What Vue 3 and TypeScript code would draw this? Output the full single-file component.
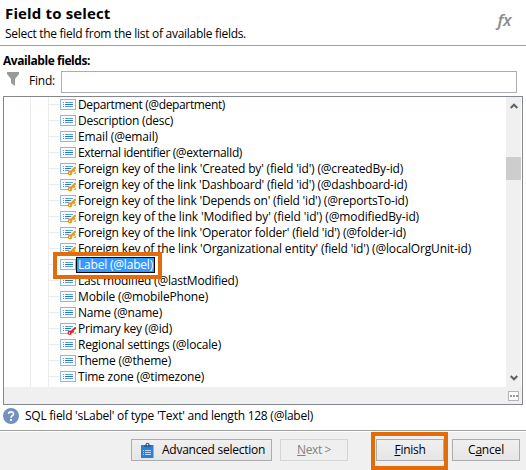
<script setup lang="ts">
type Kind = 'field' | 'foreign' | 'primary'
interface Field {
  text: string
  kind: Kind
  width: number
}

const fields: Field[] = [
  { text: 'Department (@department)', kind: 'field', width: 147 },
  { text: 'Description (desc)', kind: 'field', width: 95 },
  { text: 'Email (@email)', kind: 'field', width: 80 },
  { text: 'External identifier (@externalId)', kind: 'field', width: 164 },
  { text: "Foreign key of the link 'Created by' (field 'id') (@createdBy-id)", kind: 'foreign', width: 325 },
  { text: "Foreign key of the link 'Dashboard' (field 'id') (@dashboard-id)", kind: 'foreign', width: 329 },
  { text: "Foreign key of the link 'Depends on' (field 'id') (@reportsTo-id)", kind: 'foreign', width: 330 },
  { text: "Foreign key of the link 'Modified by' (field 'id') (@modifiedBy-id)", kind: 'foreign', width: 341 },
  { text: "Foreign key of the link 'Operator folder' (field 'id') (@folder-id)", kind: 'foreign', width: 328 },
  { text: "Foreign key of the link 'Organizational entity' (field 'id') (@localOrgUnit-id)", kind: 'foreign', width: 393 },
  { text: 'Label (@label)', kind: 'field', width: 75 },
  { text: 'Last modified (@lastModified)', kind: 'field', width: 160 },
  { text: 'Mobile (@mobilePhone)', kind: 'field', width: 130 },
  { text: 'Name (@name)', kind: 'field', width: 84 },
  { text: 'Primary key (@id)', kind: 'primary', width: 94 },
  { text: 'Regional settings (@locale)', kind: 'field', width: 143 },
  { text: 'Theme (@theme)', kind: 'field', width: 93 },
  { text: 'Time zone (@timezone)', kind: 'field', width: 126 },
]
const selected = 10

const context = document.createElement('canvas').getContext('2d')

/* Letter spacing that brings a label to its intended width. */
function fit(text: string, width: number, font = '12px "Open Sans"'): { letterSpacing: string } {
  if (!context) return { letterSpacing: '0' }
  context.font = font
  const spacing = (width - context.measureText(text).width) / text.length
  return { letterSpacing: `${spacing.toFixed(3)}px` }
}
</script>

<template>
  <div class="dialog">
    <header class="header">
      <div>
        <h1><span :style="fit('Field to select', 105.5, 'bold 15px &quot;Open Sans&quot;')">Field to select</span></h1>
        <p><span :style="fit('Select the field from the list of available fields.', 241)">Select the field from the list of available fields.</span></p>
      </div>
      <span class="fx">fx</span>
    </header>

    <main class="content">
      <div class="caption"><span :style="fit('Available fields:', 87, 'bold 12px &quot;Open Sans&quot;')">Available fields:</span></div>
      <div class="find">
        <svg class="funnel" width="12" height="14" viewBox="0 0 12 14"><path d="M0 0H12V2L8 7V14L4 11V7L0 2Z" fill="#999" /></svg>
        <label for="find"><span :style="fit('Find:', 26)">Find:</span></label>
        <input id="find" type="text" />
      </div>

      <div class="tree">
        <div class="view">
          <ul class="rows">
            <li v-for="(field, i) in fields" :key="field.text" class="row">
              <svg class="icon" width="16" height="14" viewBox="0 0 16 14">
                <rect x=".5" y="1.5" width="15" height="10" fill="#fff" stroke="#84bae6" />
                <path d="M3 4.5h1M3 6.5h1M3 8.5h1" stroke="#4a94d8" />
                <path d="M5 4.5h8M5 8.5h8" stroke="#5a9fdb" />
                <path d="M5 6.5h8" stroke="#2675bf" />
                <template v-if="field.kind === 'foreign'">
                  <path d="M17 4.5L9.5 12" stroke="#fff" stroke-width="5.5" />
                  <path d="M15.8 5L10.5 10.3M13.2 8l1.6 1.6" stroke="#f0960f" stroke-width="2.2" />
                  <circle cx="10" cy="11" r="2.4" fill="#f0960f" />
                  <circle cx="9.8" cy="11.3" r=".7" fill="#fff" />
                </template>
                <template v-if="field.kind === 'primary'">
                  <path d="M17 4.5L9.5 12" stroke="#fff" stroke-width="5.5" />
                  <path d="M15.8 5.4L10.5 10.3M12.2 9l1.4 1.4" stroke="#e52428" stroke-width="2.1" />
                  <circle cx="9.8" cy="10.8" r="2.2" fill="#e52428" />
                  <circle cx="9.5" cy="11" r=".7" fill="#fff" />
                </template>
              </svg>
              <span class="name" :class="{ selected: i === selected }" :style="fit(field.text, field.width)">{{ field.text }}</span>
            </li>
          </ul>
          <div class="vbar">
            <svg class="up" width="8" height="6" viewBox="0 0 8 6"><path d="M.7 5L4 1.7L7.3 5" fill="none" stroke="#606060" stroke-width="2" /></svg>
            <div class="thumb"></div>
            <svg class="down" width="8" height="6" viewBox="0 0 8 6"><path d="M.7 1L4 4.3L7.3 1" fill="none" stroke="#606060" stroke-width="2" /></svg>
          </div>
        </div>
        <div class="hbar"><span class="more"><i></i><i></i><i></i></span></div>
        <div class="mark mark-row"></div>
      </div>

      <div class="hint">
        <svg width="16" height="16" viewBox="0 0 16 16">
          <circle cx="8" cy="8" r="8" fill="#7390c4" />
          <path d="M5.6 6.1C5.6 3 10.5 3.1 10.5 5.9C10.5 7.7 8 7.7 8 9.7" fill="none" stroke="#fff" stroke-width="1.7" />
          <rect x="7.1" y="11" width="1.9" height="1.9" fill="#fff" />
        </svg>
        <span :style="fit('SQL field \'sLabel\' of type \'Text\' and length 128 (@label)', 288)">SQL field 'sLabel' of type 'Text' and length 128 (@label)</span>
      </div>
    </main>

    <footer class="footer">
      <button class="advanced">
        <svg width="13" height="16" viewBox="0 0 13 16">
          <path d="M0 3H12.5V16H0Z" fill="#2e7fcd" />
          <path d="M3 5V3H4.5C4.5 0 8.5 0 8.5 3H10V5Z" fill="#235d9b" />
          <circle cx="6.5" cy="2.6" r=".8" fill="#fff" />
          <path d="M2 8.5h1M4 8.5h6M2 10.5h1M4 10.5h6M2 12.5h1M4 12.5h6" stroke="#b9d7f2" />
        </svg>
        <span :style="fit('Advanced selection', 103)">Advanced selection</span>
      </button>
      <button class="next" disabled><span :style="fit('Next >', 34)"><u>N</u>ext &gt;</span></button>
      <div class="finish">
        <button><span :style="fit('Finish', 31)"><u>F</u>inish</span></button>
        <div class="mark mark-button"></div>
      </div>
      <button><span :style="fit('Cancel', 36)">C<u>a</u>ncel</span></button>
    </footer>
  </div>
</template>

<style>
body {
  margin: 0;
  overflow: hidden;
}
</style>

<style scoped>
* {
  box-sizing: border-box;
}
.dialog {
  width: 526px;
  height: 470px;
  display: flex;
  flex-direction: column;
  background: #fff;
  color: #000;
  font: 12px/16px 'Open Sans', 'Noto Sans', sans-serif;
  white-space: nowrap;
}
.header {
  height: 46px;
  display: flex;
  justify-content: space-between;
  padding: 3px 15px 0 5px;
  border-bottom: 1px solid #a0a0a0;
}
h1 {
  margin: 0;
  font-size: 15px;
  line-height: 20px;
  font-weight: 700;
}
p {
  margin: 3px 0 0;
}
.fx {
  padding-top: 7px;
  color: #8b8b8b;
  font: italic 600 17px/20px 'Open Sans', sans-serif;
  letter-spacing: -0.5px;
}
.content {
  height: 384px;
  padding: 7px 3px 0;
}
.caption {
  height: 18px;
  font-weight: 700;
}
.find {
  height: 23px;
  display: flex;
  align-items: flex-start;
  padding-left: 4px;
}
.funnel {
  margin: 1px 10px 0 0;
}
.find label {
  width: 32px;
  padding-top: 2px;
}
.find input {
  width: 456px;
  height: 22px;
  padding: 0;
  border: 1px solid #abadb3;
  border-radius: 0;
}
.tree {
  position: relative;
  width: 520px;
  height: 309px;
  margin-top: 2px;
  border: 1px solid #828790;
}
.view {
  height: 290px;
  display: flex;
}
.rows {
  width: 502px;
  margin: 0;
  padding: 0;
  list-style: none;
  background:
    linear-gradient(#ececec, #ececec) 26px 0 / 1px 100% no-repeat,
    linear-gradient(#ececec, #ececec) 44px 0 / 1px 100% no-repeat;
}
.row {
  height: 16px;
  display: flex;
  align-items: flex-start;
  padding-left: 45px;
}
.row::before {
  content: '';
  width: 10px;
  height: 1px;
  margin: 7px 1px 0 0;
  background: #ececec;
}
.icon {
  margin-top: 1px;
}
.name {
  height: 16px;
  padding: 0 2px;
  line-height: 16px;
}
.selected {
  padding: 0 1px;
  border: 1px solid #000;
  background: #3399ff;
  color: #fff;
  line-height: 14px;
}
.vbar {
  width: 15px;
  display: flex;
  flex-direction: column;
  align-items: center;
  background: #f0f0f0;
}
.up {
  margin: 6px 0 48px;
}
.thumb {
  width: 15px;
  height: 23px;
  background: #cdcdcd;
}
.down {
  margin-top: 195px;
}
.hbar {
  height: 17px;
  display: flex;
  justify-content: flex-end;
  align-items: center;
  padding-right: 3px;
  background: #f0f0f0;
}
.more {
  width: 11px;
  height: 10px;
  display: flex;
  justify-content: center;
  align-items: center;
  gap: 1px;
  border: 1px solid #b4b4b4;
  background: #fff;
}
.more i {
  width: 2px;
  height: 2px;
  background: #999;
}
.mark {
  position: absolute;
  border: 4px solid #e36c0a;
}
.mark-row {
  left: 49px;
  top: 155px;
  width: 109px;
  height: 27px;
}
.hint {
  display: flex;
  gap: 6px;
  padding-top: 3px;
}
.footer {
  height: 40px;
  display: flex;
  gap: 8px;
  padding: 7px 0 0 131px;
  border-top: 1px solid #a0a0a0;
  background: #f0f0f0;
  box-shadow: inset 0 1px #fff;
}
button {
  width: 68px;
  height: 22px;
  display: flex;
  align-items: center;
  justify-content: center;
  flex: none;
  margin: 1px 0 0;
  padding: 0;
  border: 1px solid #acacac;
  border-radius: 0;
  background: linear-gradient(#f0f0f0, #e6e6e6);
  color: #000;
  font: inherit;
}
.advanced {
  width: 141px;
  justify-content: flex-start;
  gap: 8px;
  padding-left: 9px;
}
.next {
  border-color: #d5d5d5;
  background: #efefef;
  color: #838383;
}
u {
  text-underline-offset: 1px;
}
.finish {
  position: relative;
  margin-left: 20px;
}
.mark-button {
  left: -5px;
  top: -6px;
  width: 77px;
  height: 38px;
}
</style>
